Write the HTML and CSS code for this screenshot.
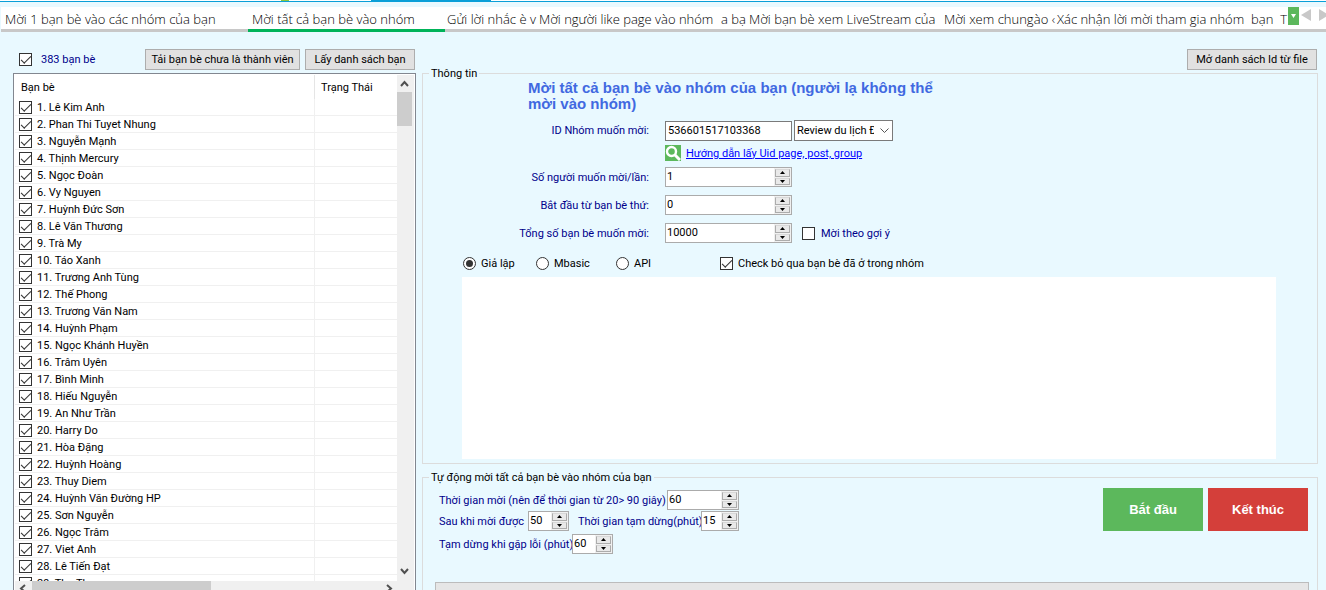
FILE: index.html
```html
<!DOCTYPE html>
<html lang="vi">
<head>
<meta charset="utf-8">
<title>Mời tất cả bạn bè vào nhóm</title>
<link rel="stylesheet" href="styles.css">
</head>
<body>
<div class="app">
  <div class="top-edge"><span class="edge-dot"></span><span class="edge-tab"></span></div>
  <nav class="tabs">
    <button class="tab tab-first">Mời 1 bạn bè vào các nhóm của bạn</button>
    <button class="tab tab-wide active">Mời tất cả bạn bè vào nhóm</button>
    <button class="tab tab-narrow"><span>Gửi lời nhắc</span><span class="rest">è v</span></button>
    <button class="tab tab-long"><span>Mời người like page vào nhóm</span><span class="rest">a bạ</span></button>
    <button class="tab tab-wide tight">Mời bạn bè xem LiveStream của</button>
    <button class="tab tab-mid"><span>Mời xem chung</span><span class="rest">ào ‹</span></button>
    <button class="tab tab-last"><span>Xác nhận lời mời tham gia nhóm</span><span>bạn</span><span class="next">T</span></button>
    <div class="tab-tools">
      <button class="tab-menu" aria-label="Danh sách thẻ"><svg width="5" height="4" viewBox="0 0 5 4"><path d="M0 0h5L2.500 4z" fill="#fff"/></svg></button>
      <button class="tab-arrow" aria-label="Trước"><svg width="10" height="12" viewBox="0 0 10 12"><path d="M10 0v12L0 6z" fill="#c8c8c8"/></svg></button>
      <button class="tab-arrow" aria-label="Sau"><svg width="10" height="12" viewBox="0 0 10 12"><path d="M0 0v12l10-6z" fill="#c8c8c8"/></svg></button>
    </div>
  </nav>

  <main class="content">
    <section class="friends">
      <div class="toolbar">
        <label class="check all"><input type="checkbox" checked><span>383 bạn bè</span></label>
        <button class="btn btn-load">Tải bạn bè chưa là thành viên</button>
        <button class="btn btn-list">Lấy danh sách bạn</button>
      </div>
      <div class="list-box">
        <div class="list-body">
          <div class="list-view">
            <table class="list">
              <thead><tr><th class="name">Bạn bè</th><th>Trạng Thái</th></tr></thead>
              <tbody id="rows"></tbody>
            </table>
          </div>
          <div class="vbar">
            <svg width="15" height="17" viewBox="0 0 15 17"><path d="M4 11l3.500-4 3.500 4" fill="none" stroke="#505050" stroke-width="2"/></svg>
            <div class="vthumb"></div>
            <svg class="end" width="15" height="17" viewBox="0 0 15 17"><path d="M4 5l3.500 4L11 5" fill="none" stroke="#505050" stroke-width="2"/></svg>
          </div>
        </div>
        <div class="hbar">
          <svg width="17" height="15" viewBox="0 0 17 15"><path d="M10 4L6 7.500l4 3.500" fill="none" stroke="#505050" stroke-width="2"/></svg>
          <div class="hthumb"></div>
          <svg class="end" width="17" height="15" viewBox="0 0 17 15"><path d="M7 4l4 3.500L7 11" fill="none" stroke="#505050" stroke-width="2"/></svg>
        </div>
      </div>
    </section>

    <section class="settings">
      <div class="toolbar right"><button class="btn btn-open">Mở danh sách Id từ file</button></div>
      <fieldset class="group">
        <legend>Thông tin</legend>
        <h1 class="title">Mời tất cả bạn bè vào nhóm của bạn (người lạ không thể mời vào nhóm)</h1>
        <div class="form">
          <label for="gid">ID Nhóm muốn mời:</label>
          <div class="field">
            <input class="text" id="gid" type="text" value="536601517103368">
            <span class="combo"><select aria-label="Nhóm"><option>Review du lịch Đà Lạt</option></select><svg width="9" height="6" viewBox="0 0 9 6"><path d="M.5.5l4 4 4-4" fill="none" stroke="#555"/></svg></span>
          </div>
          <div class="field guide">
            <svg width="16" height="16" viewBox="0 0 16 16"><path fill="#5cb85c" d="M0 0h16v16H0z"/><circle cx="6.500" cy="6.500" r="4.500" fill="none" stroke="#fff" stroke-width="2.400"/><path d="M10 10l5 5" stroke="#fff" stroke-width="3"/></svg>
            <a href="#guide">Hướng dẫn lấy Uid page, post, group</a>
          </div>
          <label for="per">Số người muốn mời/lần:</label>
          <div class="field"><span class="spin"><input id="per" type="number" value="1"></span></div>
          <label for="from">Bắt đầu từ bạn bè thứ:</label>
          <div class="field"><span class="spin"><input id="from" type="number" value="0"></span></div>
          <label for="total">Tổng số bạn bè muốn mời:</label>
          <div class="field"><span class="spin"><input id="total" type="number" value="10000"></span>
            <label class="check hint"><input type="checkbox"><span>Mời theo gợi ý</span></label></div>
        </div>
        <div class="modes">
          <label class="check m1"><input type="radio" name="mode" checked><span>Giả lập</span></label>
          <label class="check m2"><input type="radio" name="mode"><span>Mbasic</span></label>
          <label class="check m3"><input type="radio" name="mode"><span>API</span></label>
          <label class="check"><input type="checkbox" checked><span>Check bỏ qua bạn bè đã ở trong nhóm</span></label>
        </div>
        <textarea class="log" aria-label="Nhật ký"></textarea>
      </fieldset>

      <fieldset class="group auto">
        <legend>Tự động mời tất cả bạn bè vào nhóm của bạn</legend>
        <div class="auto-row">
          <div class="timers">
            <div class="timer"><label class="l1" for="t1">Thời gian mời (nên để thời gian từ 20&gt; 90 giây)</label><span class="spin medium"><input id="t1" type="number" value="60"></span></div>
            <div class="timer"><label class="l2" for="t2">Sau khi mời được</label><span class="spin small"><input id="t2" type="number" value="50"></span><label class="l3" for="t3">Thời gian tạm dừng(phút)</label><span class="spin small tiny"><input id="t3" type="number" value="15"></span></div>
            <div class="timer spaced"><label class="l4" for="t4">Tạm dừng khi gặp lỗi (phút)</label><span class="spin small"><input id="t4" type="number" value="60"></span></div>
          </div>
          <div class="actions"><button class="act start">Bắt đầu</button><button class="act stop">Kết thúc</button></div>
        </div>
        <div class="progress" role="progressbar" aria-label="Tiến độ"></div>
      </fieldset>
    </section>
  </main>
</div>
<script src="app.js"></script>
</body>
</html>
```
FILE: styles.css
```css
* { box-sizing: border-box; }
body {
  margin: 0;
  background: #e9f9ff;
  color: #000;
  font: 11px/13px Roboto, "Liberation Sans", Arial, sans-serif;
}
button, input, select, textarea { font: inherit; color: inherit; margin: 0; border-radius: 0; }
button { padding: 0; border: 0; background: none; white-space: nowrap; }
label { white-space: nowrap; }
.app { height: 100vh; overflow: hidden; display: flex; flex-direction: column; }

.top-edge { height: 2px; flex: none; display: flex; background: #fff; border-bottom: 1px solid #0a9fd8; }
.edge-dot { width: 8px; height: 1px; margin-left: 281px; background: #8cc63f; }
.edge-tab { width: 120px; height: 1px; margin-left: 82px; background: #0a9fd8; }

.tabs { flex: none; display: flex; height: 25px; margin: 5px 0 0 1px; background: #fff; }
.tab {
  flex: none; display: flex; justify-content: space-between; align-items: center;
  overflow: hidden; padding: 3px 2px 0 4px; border-bottom: 3px solid #c8c8c8;
  font: 300 13px/19px "Open Sans", "Noto Sans", sans-serif; text-align: left;
}
.tab.active { border-color: #00b359; }
.tab.tight, .tab-narrow, .tab-long, .tab-mid { padding: 3px 1px 0 2px; }
.tab-first { width: 247px; }
.tab-wide { width: 197px; }
.tab-narrow { width: 92px; }
.tab-long { width: 210px; }
.tab-mid { width: 112px; padding-left: 0; }
.tab-last { flex: 1; padding: 3px 1px 0 1px; }
.tab-tools { flex: none; display: flex; border-bottom: 3px solid #c8c8c8; width: 38px; overflow: hidden; gap: 2px; }
.tab-menu { flex: none; width: 11px; height: 18px; background: #5cb85c; display: grid; place-items: center; }
.tab-arrow { flex: none; width: 16px; height: 16px; display: grid; place-items: start; padding-top: 2px; }

.content { flex: 1; min-height: 0; display: flex; gap: 6px; padding: 17px 8px 0 13px; }
.friends { width: 403px; flex: none; display: flex; flex-direction: column; }
.settings { flex: 1; min-width: 0; }
.toolbar { display: flex; height: 21px; align-items: center; gap: 5px; flex: none; }
.toolbar.right { justify-content: flex-end; }
.btn { height: 21px; border: 1px solid #adadad; background: #e1e1e1; }
.btn-load { width: 155px; margin-left: auto; }
.btn-list { width: 110px; margin-right: 1px; }
.btn-open { width: 130px; margin-right: 1px; }

.check { display: inline-flex; align-items: center; gap: 5px; color: #000; }
.check.all { margin-left: 6px; gap: 9px; color: #00008b; }
.check.hint { margin-left: 10px; gap: 6px; color: #00008b; }
input[type="checkbox"], input[type="radio"] {
  appearance: none; width: 13px; height: 13px; flex: none;
  border: 1px solid #333; background: #fff; display: grid; place-items: center;
}
input[type="radio"] { border-radius: 50%; }
input[type="radio"]:checked::before { content: ""; width: 7px; height: 7px; border-radius: 50%; background: #333; }
input[type="checkbox"]:checked::before {
  content: ""; width: 9px; height: 4px; margin-top: -2px;
  border: solid #333; border-width: 0 0 1px 1px; transform: rotate(-45deg);
}

.list-box { flex: 1; min-height: 0; margin: 3px 0 -8px; padding: 1px; border: 1px solid #828790; background: #fff; display: flex; flex-direction: column; }
.list-body { flex: 1; min-height: 0; display: flex; }
.list-view { flex: 1; overflow: hidden; }
.list { width: 100%; table-layout: fixed; border-collapse: separate; border-spacing: 0; }
.list th { height: 24px; padding: 0 0 0 6px; font-weight: normal; text-align: left; }
.list th.name { width: 300px; border-right: 1px solid #e5e5e5; }
.list td { height: 17px; padding: 0 0 0 4px; border-bottom: 1px solid #f0f0f0; }
.list td:first-child { border-right: 1px solid #f0f0f0; }
.list .check { display: flex; height: 16px; }
.vbar { width: 17px; flex: none; padding-right: 2px; background: #f0f0f0; display: flex; flex-direction: column; }
.vthumb { height: 34px; background: #cdcdcd; }
.end { margin-top: auto; }
.hbar { flex: none; height: 15px; background: #f0f0f0; display: flex; padding-right: 17px; }
.hthumb { width: 179px; background: #cdcdcd; }
.hbar .end { margin: 0 0 0 auto; }

.group { margin: 0; padding: 0; border: 1px solid #dcdcdc; min-width: 0; margin-top: -3px; }
.group legend { margin-left: 6px; padding: 0 2px; }
.title { margin: 0 0 8px 105px; max-width: 420px; color: #4169e1; font: bold 15px/16px "Liberation Sans", Arial, sans-serif; }
.form { display: grid; grid-template-columns: 226px 1fr; gap: 4px 16px; align-items: center; grid-auto-rows: minmax(16px, auto); color: #00008b; }
.form > label { text-align: right; }
.field { display: flex; align-items: center; }
.guide { grid-column: 2; gap: 5px; }
.guide a { color: #00f; }
.text { width: 127px; height: 20px; padding: 0 2px; border: 1px solid #7a7a7a; background: #fff; color: #000; }
.combo { display: grid; width: 99px; height: 21px; margin-left: 2px; align-items: center; }
.combo select { grid-area: 1 / 1; width: 100%; height: 21px; appearance: none; padding: 0 18px 0 2px; border: 1px solid #7a7a7a; background: #fff; color: #000; }
.combo svg { grid-area: 1 / 1; justify-self: end; margin-right: 4px; pointer-events: none; }
.spin { display: grid; grid-template-columns: 1fr 17px; width: 127px; height: 20px; margin: 2px 0; border: 1px solid #ababab; background: #fff; color: #000; }
.spin input { width: 100%; min-width: 0; border: 0; padding: 0 0 2px 1px; background: none; appearance: textfield; outline: 0; }
.spin input::-webkit-inner-spin-button { display: none; }
.steps { display: grid; grid-template-rows: 1fr 1fr; padding: 1px; background: #f0f0f0; gap: 1px; }
.steps button { display: grid; place-items: center; background: #e9e9e9; border: 1px solid #acacac; border-top-color: #d8d8d8; }
.modes { display: flex; height: 16px; align-items: center; margin: 10px 0 6px 40px; }
.m1 { width: 73px; }
.m2 { width: 80px; }
.m3 { width: 104px; }
.log { display: block; width: calc(100% - 80px); height: 182px; margin: 0 0 4px 39px; border: 0; resize: none; background: #fff; }

.group.auto { margin-top: 7px; height: 140px; }
.auto-row { display: flex; justify-content: space-between; padding: 6px 9px 0 16px; color: #00008b; }
.timer { display: flex; align-items: center; }
.timer .spin { margin: 0 0 1px; }
.timer.spaced { margin-top: 2px; }
.l1 { width: 228px; }
.l2 { width: 89px; }
.l3 { width: 132px; padding-left: 9px; }
.l4 { width: 133px; }
.spin.medium { width: 72px; }
.spin.small { width: 41px; }
.spin.tiny { width: 38px; }
.actions { display: flex; gap: 5px; margin-top: -2px; }
.act { width: 100px; height: 43px; color: #fff; font: bold 13px/16px "Liberation Sans", Arial, sans-serif; }
.start { background: #5cb85c; }
.stop { background: #d43f3a; }
.progress { height: 23px; margin: 27px 8px 0 12px; border: 1px solid #bcbcbc; background: #e6e6e6; }
```
FILE: app.js
```js
const names = ["Lê Kim Anh", "Phan Thi Tuyet Nhung", "Nguyễn Mạnh", "Thịnh Mercury", "Ngọc Đoàn", "Vy Nguyen", "Huỳnh Đức Sơn", "Lê Văn Thương", "Trà My", "Táo Xanh", "Trương Anh Tùng", "Thế Phong", "Trương Văn Nam", "Huỳnh Phạm", "Ngọc Khánh Huyền", "Trâm Uyên", "Bình Minh", "Hiếu Nguyễn", "An Như Trần", "Harry Do", "Hòa Đặng", "Huỳnh Hoàng", "Thuy Diem", "Huỳnh Văn Đường HP", "Sơn Nguyễn", "Ngọc Trâm", "Viet Anh", "Lê Tiến Đạt", "Thu Thu"];
document.getElementById("rows").innerHTML = names.map((name, i) =>
  `<tr><td><label class="check"><input type="checkbox" checked><span>${i + 1}. ${name}</span></label></td><td></td></tr>`).join("");

document.querySelectorAll(".spin").forEach((spin) => {
  const input = spin.querySelector("input");
  const steps = document.createElement("span");
  steps.className = "steps";
  steps.innerHTML = `<button type="button" aria-label="Tăng"><svg width="5" height="3" viewBox="0 0 5 3"><path d="M2.500 0L5 3H0z"/></svg></button><button type="button" aria-label="Giảm"><svg width="5" height="3" viewBox="0 0 5 3"><path d="M0 0h5L2.500 3z"/></svg></button>`;
  steps.children[0].onclick = () => input.stepUp();
  steps.children[1].onclick = () => input.stepDown();
  spin.append(steps);
});
```
